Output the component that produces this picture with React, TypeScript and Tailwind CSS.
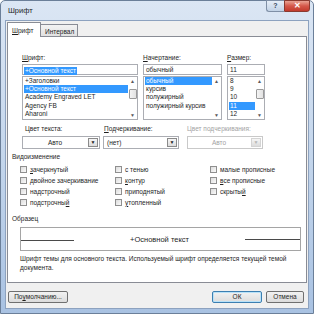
import { ReactNode } from 'react';

const font = "font-['Liberation_Sans',Arial,sans-serif]";

function ScrollBar({ thumb }: { thumb?: boolean }) {
  return (
    <div className="w-[9px] flex flex-col items-center justify-between py-[1px] text-[#5a5a5a]">
      <span className="text-[5px] leading-[6px]">▲</span>
      {thumb && <div className="-mt-[8px] w-[8px] h-[10px] border border-[#9a9a9a] bg-gradient-to-r from-[#f4f4f4] to-[#e2e2e2] rounded-[1px]" />}
      <span className="text-[5px] leading-[6px]">▼</span>
    </div>
  );
}

function ListBox({ items, selected, thumb }: { items: string[]; selected: number; thumb?: boolean }) {
  return (
    <div className="mt-[1px] h-[44px] flex border border-[#abadb3] bg-white">
      <div className="flex-1 pl-[1px] overflow-hidden">
        {items.map((item, i) => (
          <div
            key={item}
            className={
              i === selected
                ? 'h-[8.2px] leading-[8.2px] pl-[1px] bg-[#3399ff] text-white whitespace-nowrap'
                : 'h-[8.2px] leading-[8.2px] pl-[1px] whitespace-nowrap'
            }
          >
            {item}
          </div>
        ))}
      </div>
      <ScrollBar thumb={thumb} />
    </div>
  );
}

function Select({ value, center, disabled }: { value: string; center?: boolean; disabled?: boolean }) {
  return (
    <div className={`mt-[3px] h-[13px] flex border ${disabled ? 'border-[#c9c9c9]' : 'border-[#abadb3]'} bg-white`}>
      <div
        className={`flex-1 leading-[11px] ${center ? 'text-center' : 'pl-[3px]'} ${disabled ? 'text-[#a3a3a3]' : ''}`}
      >
        {value}
      </div>
      <div
        className={`w-[10px] m-[1px] flex items-center justify-center border ${
          disabled ? 'border-[#d4d4d4] text-[#b5b5b5]' : 'border-[#8a8a8a] text-[#222]'
        } bg-gradient-to-b from-[#f6f6f6] to-[#dcdcdc] text-[5px]`}
      >
        ▼
      </div>
    </div>
  );
}

function Check({ children }: { children: ReactNode }) {
  return (
    <div className="h-[11px] flex items-center gap-[3px]">
      <div className="w-[7px] h-[7px] border border-[#8f8f8f] bg-gradient-to-br from-[#dcdcdc] to-[#fbfbfb]" />
      <span className="leading-[8px]">{children}</span>
    </div>
  );
}

function Button({ children, primary, className }: { children: ReactNode; primary?: boolean; className: string }) {
  return (
    <div
      className={`h-[12px] flex items-center justify-center rounded-[2px] border ${
        primary ? 'border-[#3c7fb1] shadow-[inset_0_0_0_1px_#b9e2f8]' : 'border-[#707070]'
      } bg-gradient-to-b from-[#f2f2f2] to-[#dcdcdc] leading-[8px] ${className}`}
    >
      {children}
    </div>
  );
}

export default function App() {
  return (
    <div
      className={`w-[314px] h-[314px] flex flex-col border border-[#6b7f99] rounded-t-[5px] bg-gradient-to-b from-[#dbe6f4] via-[#c4d6ec] to-[#a9c2e2] px-[4px] pb-[4px] text-[6.5px] text-[#1e1e1e] ${font}`}
    >
      {/* Title bar */}
      <div className="h-[19px] flex justify-between">
        <div className="pl-[3px] pt-[5px] text-[7.5px] leading-[9px] text-[#1e1e1e]">Шрифт</div>
        <div className="flex mr-[-1px] -mt-px">
          <div className="w-[18px] h-[12px] flex items-center justify-center border border-[#7f8fa6] border-r-0 rounded-bl-[3px] bg-gradient-to-b from-[#e6eef8] to-[#c2d2e6] text-[7px] font-bold text-[#3a4a60]">
            ?
          </div>
          <div className="w-[26px] h-[12px] flex items-center justify-center border border-[#8a3a30] rounded-br-[3px] bg-gradient-to-b from-[#e8a294] via-[#d4574a] to-[#c23a2c] text-[8px] font-bold text-white">
            ✕
          </div>
        </div>
      </div>

      {/* Client area */}
      <div className="flex-1 flex flex-col border border-[#8da2bf] bg-[#f0f0f0] px-[1px]">
        {/* Tabs */}
        <div className="relative z-10 -mb-px h-[16px] flex items-end">
          <div className="h-[15px] w-[34px] flex items-start pt-[4px] pl-[4px] border border-b-0 border-[#898c95] bg-white rounded-t-[1px]">
            <span className="leading-[7px]">
              <span className="underline">Ш</span>рифт
            </span>
          </div>
          <div className="mb-[1px] h-[12px] w-[37px] flex items-start pt-[3px] pl-[4px] border border-l-0 border-b-0 border-[#898c95] bg-gradient-to-b from-[#f3f3f3] to-[#e1e1e1]">
            <span className="leading-[7px]">Интервал</span>
          </div>
        </div>

        {/* Panel */}
        <div className="h-[247px] flex flex-col border border-[#898c95] bg-white">
          <div className="mt-[17px] ml-[14px] flex gap-[5px]">
            <div className="w-[116px] flex flex-col">
              <div className="h-[8px] leading-[8px]">
                <span className="underline">Ш</span>рифт:
              </div>
              <div className="mt-[2px] h-[11px] border border-[#abadb3] bg-white pl-[1px] pt-[1px]">
                <span className="inline-block h-[8px] leading-[8px] bg-[#3399ff] text-white px-[1px]">+Основной текст</span>
              </div>
              <ListBox
                items={['+Заголовки', '+Основной текст', 'Academy Engraved LET', 'Agency FB', 'Aharoni']}
                selected={1}
                thumb
              />
            </div>
            <div className="w-[79px] flex flex-col">
              <div className="h-[8px] leading-[8px]">
                <span className="underline">Н</span>ачертание:
              </div>
              <div className="mt-[2px] h-[11px] border border-[#abadb3] bg-white pl-[2px] leading-[9px]">обычный</div>
              <ListBox items={['обычный', 'курсив', 'полужирный', 'полужирный курсив']} selected={0} />
            </div>
            <div className="w-[38px] flex flex-col">
              <div className="h-[8px] leading-[8px]">
                <span className="underline">Р</span>азмер:
              </div>
              <div className="mt-[2px] h-[11px] border border-[#abadb3] bg-white pl-[2px] leading-[9px]">11</div>
              <ListBox items={['8', '9', '10', '11', '12']} selected={3} thumb />
            </div>
          </div>

          {/* Colour / underline */}
          <div className="mt-[5px] ml-[14px] flex">
            <div className="w-[78px] flex flex-col">
              <div className="h-[8px] leading-[8px] pl-[3px]">Цвет текста:</div>
              <Select value="Авто" center />
            </div>
            <div className="ml-[3px] w-[76px] flex flex-col">
              <div className="h-[8px] leading-[8px] pl-[1px]">
                <span className="underline">П</span>одчеркивание:
              </div>
              <Select value="(нет)" />
            </div>
            <div className="ml-[8px] w-[76px] flex flex-col">
              <div className="h-[8px] leading-[8px] text-[#a3a3a3]">Цвет подчеркивания:</div>
              <Select value="Авто" center disabled />
            </div>
          </div>

          {/* Effects */}
          <div className="mt-[4px] ml-[4px] h-[8px] leading-[8px]">Видоизменение</div>
          <div className="mt-[3px] ml-[12px] flex">
            <div className="w-[95px] flex flex-col">
              <Check>
                <span className="underline">з</span>ачеркнутый
              </Check>
              <Check>
                <span className="underline">д</span>войное зачеркивание
              </Check>
              <Check>
                на<span className="underline">д</span>строчный
              </Check>
              <Check>
                подстрочны<span className="underline">й</span>
              </Check>
            </div>
            <div className="w-[95px] flex flex-col">
              <Check>с тенью</Check>
              <Check>
                <span className="underline">к</span>онтур
              </Check>
              <Check>приподнятый</Check>
              <Check>
                <span className="underline">у</span>топленный
              </Check>
            </div>
            <div className="w-[95px] flex flex-col">
              <Check>малые прописные</Check>
              <Check>
                <span className="underline">в</span>се прописные
              </Check>
              <Check>
                скрыты<span className="underline">й</span>
              </Check>
            </div>
          </div>

          {/* Preview */}
          <div className="mt-[7px] ml-[4px] h-[8px] leading-[8px]">Образец</div>
          <div className="mt-[4px] ml-[12px] w-[281px] h-[24px] flex items-center border border-[#a5a5a5] bg-white">
            <div className="w-[53px] h-px bg-[#4a4a4a] mt-[2px]" />
            <div className="flex-1 text-center text-[7.5px] leading-[9px]">+Основной текст</div>
            <div className="w-[55px] h-px bg-[#4a4a4a]" />
          </div>
          <div className="mt-[3px] ml-[12px] w-[284px] leading-[9px]">
            Шрифт темы для основного текста. Используемый шрифт определяется текущей темой документа.
          </div>
        </div>

        {/* Footer */}
        <div className="mt-[8px] flex pl-[1px] pr-[3px]">
          <Button className="w-[60px]">
            По <span className="underline">у</span>молчанию...
          </Button>
          <div className="flex-1" />
          <Button primary className="w-[50px]">
            ОК
          </Button>
          <Button className="ml-[4px] w-[38px]">Отмена</Button>
        </div>
      </div>
    </div>
  );
}
